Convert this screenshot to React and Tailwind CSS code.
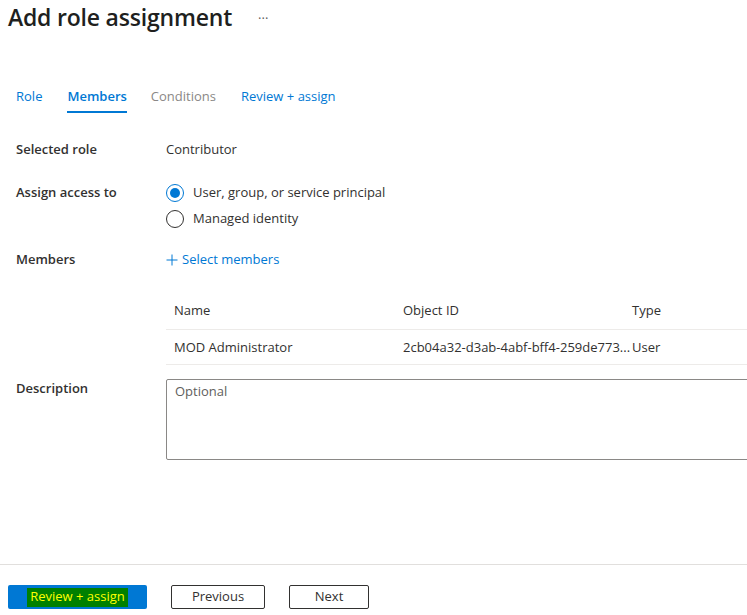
import { useState } from "react";

const font = { fontFamily: '"Open Sans", "Noto Sans", sans-serif' };

function Radio({ checked, label, onSelect }) {
  return (
    <button type="button" onClick={onSelect} className="flex items-center gap-[9px] h-[20px] text-left">
      <span className="w-[18px] h-[18px] rounded-full border border-[#323130] flex items-center justify-center shrink-0"
        style={checked ? { borderColor: "#0078d4" } : undefined}>
        {checked && <span className="w-[10px] h-[10px] rounded-full bg-[#0078d4]" />}
      </span>
      <span className="text-[13px] text-[#323130]">{label}</span>
    </button>
  );
}

export default function App() {
  const [access, setAccess] = useState("user");

  return (
    <div className="w-[747px] h-[615px] bg-white overflow-hidden flex flex-col text-[#323130]" style={font}>
      {/* Header */}
      <div className="flex items-center pl-[8px] pt-[1px] h-[34px]">
        <h1 className="text-[23px] font-semibold tracking-[-0.2px] text-[#201f1e]">Add role assignment</h1>
        <span className="ml-[26px] text-[13px] text-[#605e5c] mt-[2px]">···</span>
      </div>

      {/* Tabs */}
      <div className="flex items-end pl-[16px] mt-[46px] h-[33px] text-[13px]">
        <div className="h-full flex items-start pt-[7px] text-[#0078d4] mr-[25px]">Role</div>
        <div className="h-full flex items-start pt-[7px] font-semibold text-[#0078d4] border-b-2 border-[#0078d4] mr-[24px]">Members</div>
        <div className="h-full flex items-start pt-[7px] text-[#8a8886] mr-[25px]">Conditions</div>
        <div className="h-full flex items-start pt-[7px] text-[#0078d4]">Review + assign</div>
      </div>

      {/* Form */}
      <div className="flex flex-col pl-[16px] mt-[27px] text-[13px]">
        <div className="flex h-[20px] items-center">
          <div className="w-[150px] shrink-0 font-semibold">Selected role</div>
          <div>Contributor</div>
        </div>

        <div className="flex mt-[23px]">
          <div className="w-[150px] shrink-0 font-semibold h-[20px] flex items-center">Assign access to</div>
          <div className="flex flex-col gap-[6px]">
            <Radio checked={access === "user"} label="User, group, or service principal" onSelect={() => setAccess("user")} />
            <Radio checked={access === "mi"} label="Managed identity" onSelect={() => setAccess("mi")} />
          </div>
        </div>

        <div className="flex h-[20px] items-center mt-[21px]">
          <div className="w-[150px] shrink-0 font-semibold">Members</div>
          <button type="button" className="flex items-center gap-[4px] text-[#0078d4]">
            <svg width="12" height="12" viewBox="0 0 12 12" className="shrink-0">
              <path d="M6 0.5v11M0.5 6h11" stroke="#0078d4" strokeWidth="1" fill="none" />
            </svg>
            Select members
          </button>
        </div>

        {/* Members table */}
        <div className="ml-[150px] mt-[22px] text-[13px]">
          <div className="flex h-[38px] items-center border-b border-[#edebe9] px-[8px]">
            <div className="w-[229px]">Name</div>
            <div className="w-[229px]">Object ID</div>
            <div>Type</div>
          </div>
          <div className="flex h-[35px] items-center border-b border-[#edebe9] px-[8px] pt-[1px]">
            <div className="w-[229px]">MOD Administrator</div>
            <div className="w-[229px] whitespace-nowrap overflow-hidden">2cb04a32-d3ab-4abf-bff4-259de773...</div>
            <div>User</div>
          </div>
        </div>

        <div className="flex mt-[14px]">
          <div className="w-[150px] shrink-0 font-semibold">Description</div>
          <textarea
            placeholder="Optional"
            className="w-[600px] shrink-0 h-[81px] border border-[#8a8886] rounded-[2px] px-[8px] py-[2px] text-[13px] placeholder:text-[#605e5c] resize-none outline-none"
          />
        </div>
      </div>

      {/* Footer */}
      <div className="mt-auto border-t border-[#e1dfdd] h-[51px] flex items-start pt-[20px] pl-[8px] gap-[24px]">
        <button type="button" className="w-[139px] h-[24px] bg-[#0078d4] rounded-[2px] flex items-center justify-center">
          <span className="bg-[#008000] text-[#ffff00] text-[13px] h-[19px] px-[3px] flex items-center">Review + assign</span>
        </button>
        <button type="button" className="w-[94px] h-[24px] border border-[#323130] rounded-[2px] text-[13px] flex items-center justify-center">Previous</button>
        <button type="button" className="w-[80px] h-[24px] border border-[#323130] rounded-[2px] text-[13px] flex items-center justify-center">Next</button>
      </div>
    </div>
  );
}
